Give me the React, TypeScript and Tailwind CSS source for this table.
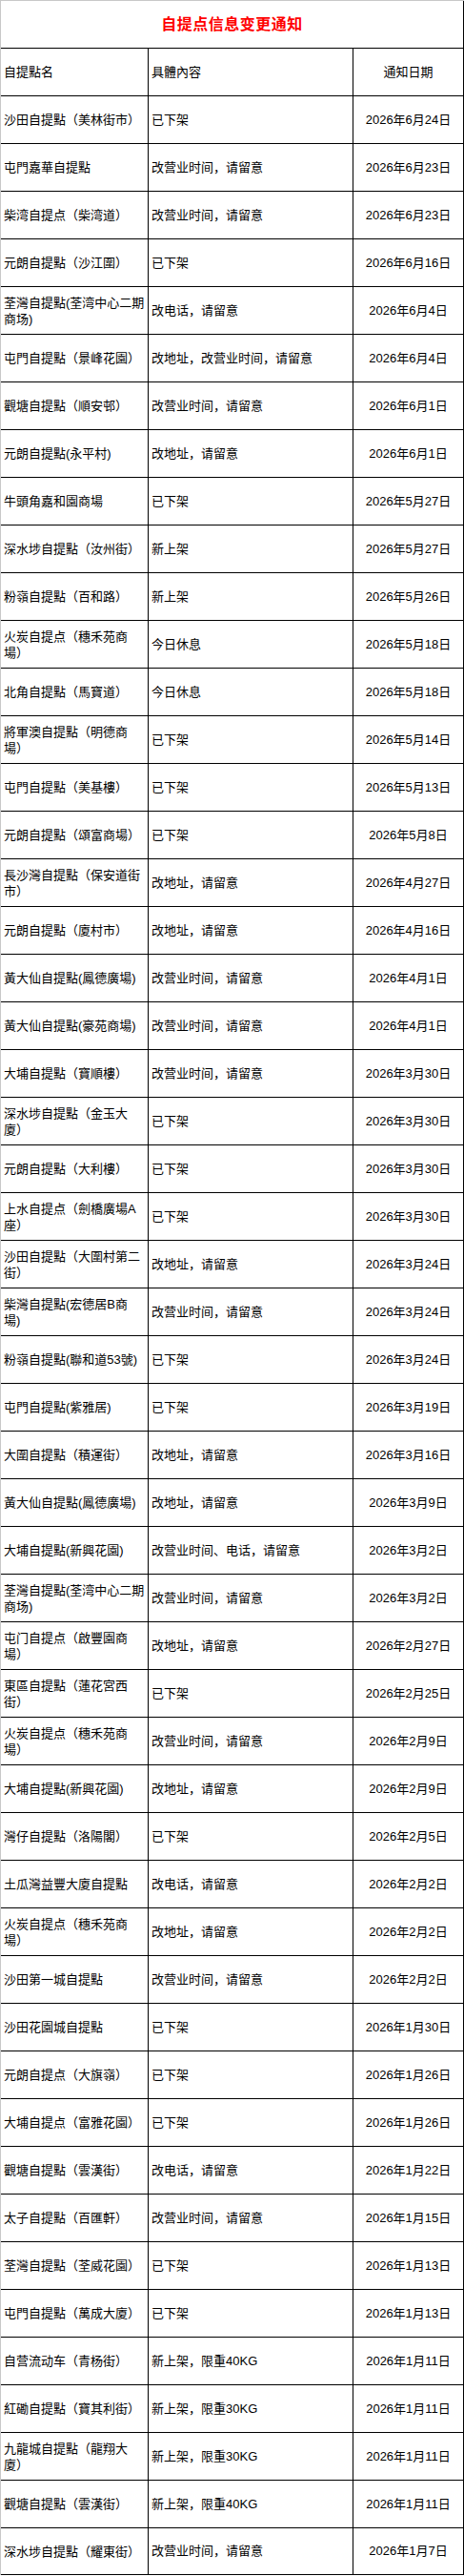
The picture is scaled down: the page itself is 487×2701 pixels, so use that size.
import React from 'react'

interface Row {
    name: string;
    detail: string;
    date: string;
}

// names with \n keep the same wrap points as the sheet
const rows: Array<Row> = [
    { name: '沙田自提點（美林街市）', detail: '已下架', date: '2026年6月24日' },
    { name: '屯門嘉華自提點', detail: '改营业时间，请留意', date: '2026年6月23日' },
    { name: '柴湾自提点（柴湾道）', detail: '改营业时间，请留意', date: '2026年6月23日' },
    { name: '元朗自提點（沙江圍）', detail: '已下架', date: '2026年6月16日' },
    { name: '荃灣自提點(荃湾中心二期\n商场)', detail: '改电话，请留意', date: '2026年6月4日' },
    { name: '屯門自提點（景峰花園）', detail: '改地址，改营业时间，请留意', date: '2026年6月4日' },
    { name: '觀塘自提點（順安邨）', detail: '改营业时间，请留意', date: '2026年6月1日' },
    { name: '元朗自提點(永平村)', detail: '改地址，请留意', date: '2026年6月1日' },
    { name: '牛頭角嘉和園商場', detail: '已下架', date: '2026年5月27日' },
    { name: '深水埗自提點（汝州街）', detail: '新上架', date: '2026年5月27日' },
    { name: '粉嶺自提點（百和路）', detail: '新上架', date: '2026年5月26日' },
    { name: '火炭自提点（穗禾苑商\n場）', detail: '今日休息', date: '2026年5月18日' },
    { name: '北角自提點（馬寶道）', detail: '今日休息', date: '2026年5月18日' },
    { name: '將軍澳自提點（明德商\n場）', detail: '已下架', date: '2026年5月14日' },
    { name: '屯門自提點（美基樓）', detail: '已下架', date: '2026年5月13日' },
    { name: '元朗自提點（頌富商場）', detail: '已下架', date: '2026年5月8日' },
    { name: '長沙灣自提點（保安道街\n市）', detail: '改地址，请留意', date: '2026年4月27日' },
    { name: '元朗自提點（廈村市）', detail: '改地址，请留意', date: '2026年4月16日' },
    { name: '黃大仙自提點(鳳德廣場)', detail: '改营业时间，请留意', date: '2026年4月1日' },
    { name: '黃大仙自提點(豪苑商場)', detail: '改营业时间，请留意', date: '2026年4月1日' },
    { name: '大埔自提點（寶順樓）', detail: '改营业时间，请留意', date: '2026年3月30日' },
    { name: '深水埗自提點（金玉大\n廈）', detail: '已下架', date: '2026年3月30日' },
    { name: '元朗自提點（大利樓）', detail: '已下架', date: '2026年3月30日' },
    { name: '上水自提点（劍橋廣場A\n座）', detail: '已下架', date: '2026年3月30日' },
    { name: '沙田自提點（大圍村第二\n街）', detail: '改地址，请留意', date: '2026年3月24日' },
    { name: '柴灣自提點(宏德居B商\n場)', detail: '改营业时间，请留意', date: '2026年3月24日' },
    { name: '粉嶺自提點(聯和道53號)', detail: '已下架', date: '2026年3月24日' },
    { name: '屯門自提點(紫雅居)', detail: '已下架', date: '2026年3月19日' },
    { name: '大圍自提點（積運街）', detail: '改地址，请留意', date: '2026年3月16日' },
    { name: '黃大仙自提點(鳳德廣場)', detail: '改地址，请留意', date: '2026年3月9日' },
    { name: '大埔自提點(新興花園)', detail: '改营业时间、电话，请留意', date: '2026年3月2日' },
    { name: '荃灣自提點(荃湾中心二期\n商场)', detail: '改营业时间，请留意', date: '2026年3月2日' },
    { name: '屯门自提点（啟豐園商\n場）', detail: '改地址，请留意', date: '2026年2月27日' },
    { name: '東區自提點（蓮花宮西\n街）', detail: '已下架', date: '2026年2月25日' },
    { name: '火炭自提点（穗禾苑商\n場）', detail: '改营业时间，请留意', date: '2026年2月9日' },
    { name: '大埔自提點(新興花園)', detail: '改地址，请留意', date: '2026年2月9日' },
    { name: '灣仔自提點（洛陽閣）', detail: '已下架', date: '2026年2月5日' },
    { name: '土瓜灣益豐大廈自提點', detail: '改电话，请留意', date: '2026年2月2日' },
    { name: '火炭自提点（穗禾苑商\n場）', detail: '改地址，请留意', date: '2026年2月2日' },
    { name: '沙田第一城自提點', detail: '改营业时间，请留意', date: '2026年2月2日' },
    { name: '沙田花園城自提點', detail: '已下架', date: '2026年1月30日' },
    { name: '元朗自提点（大旗嶺）', detail: '已下架', date: '2026年1月26日' },
    { name: '大埔自提点（富雅花園）', detail: '已下架', date: '2026年1月26日' },
    { name: '觀塘自提點（雲漢街）', detail: '改电话，请留意', date: '2026年1月22日' },
    { name: '太子自提點（百匯軒）', detail: '改营业时间，请留意', date: '2026年1月15日' },
    { name: '荃灣自提點（荃威花園）', detail: '已下架', date: '2026年1月13日' },
    { name: '屯門自提點（萬成大廈）', detail: '已下架', date: '2026年1月13日' },
    { name: '自营流动车（青杨街）', detail: '新上架，限重40KG', date: '2026年1月11日' },
    { name: '紅磡自提點（寶其利街）', detail: '新上架，限重30KG', date: '2026年1月11日' },
    { name: '九龍城自提點（龍翔大\n廈）', detail: '新上架，限重30KG', date: '2026年1月11日' },
    { name: '觀塘自提點（雲漢街）', detail: '新上架，限重40KG', date: '2026年1月11日' },
    { name: '深水埗自提點（耀東街）', detail: '改营业时间，请留意', date: '2026年1月7日' },
];

const font = "font-['Liberation_Sans','Noto_Sans_CJK_SC',sans-serif]";

const TableRow: React.FC<{ row: Row; last?: boolean }> = ({ row, last }) => {
    return (
        <div className={`grid grid-cols-[155px_215px_116px] h-[50px] border-t border-black ${last ? 'border-b' : ''}`}>
            <div className="flex items-center pl-[3px] border-r border-black whitespace-pre leading-[17px]">
                {row.name}
            </div>
            <div className="flex items-center pl-[3px] border-r border-black whitespace-pre">
                {row.detail}
            </div>
            <div className="flex items-center justify-center border-r border-black whitespace-pre">
                {row.date}
            </div>
        </div>
    );
}

const App: React.FC = () => {
    return (
        <div className={`w-[487px] bg-white text-black text-[13px] ${font}`}>
            <div className="border-l border-t border-[#c8c8c8]">
                <div className="h-[49px] flex items-center justify-center border-r border-black">
                    <div className="text-[16px] font-bold text-[#ff0000] tracking-[0.5px]">自提点信息变更通知</div>
                </div>
                <TableRow row={{ name: '自提點名', detail: '具體內容', date: '通知日期' }} />
                {rows.map((row, index) => (
                    <TableRow key={index} row={row} last={index === rows.length - 1} />
                ))}
            </div>
        </div>
    );
}

export default App;
